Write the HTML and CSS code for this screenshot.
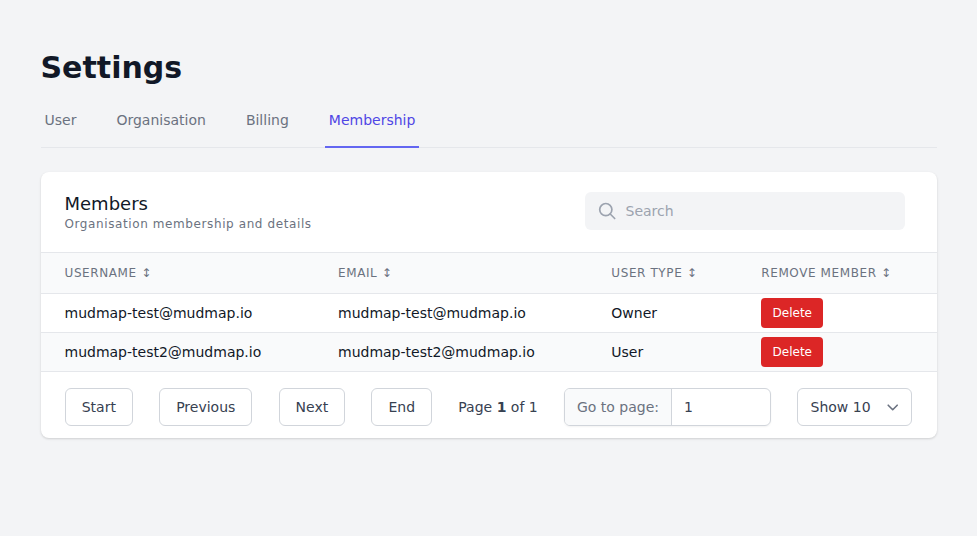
FILE: index.html
```html
<!DOCTYPE html>
<html lang="en">
<head>
<meta charset="utf-8">
<title>Settings</title>
<link rel="stylesheet" href="styles.css">
</head>
<body>
<main class="page">
  <h1>Settings</h1>
  <nav class="tabs">
    <a class="tab">User</a>
    <a class="tab">Organisation</a>
    <a class="tab">Billing</a>
    <a class="tab active">Membership</a>
  </nav>
  <section class="card">
    <header class="card-head">
      <div>
        <h2>Members</h2>
        <p class="sub">Organisation membership and details</p>
      </div>
      <label class="search">
        <svg width="20" height="20" viewBox="0 0 20 20" fill="none" stroke="currentColor" stroke-width="1.7" stroke-linecap="round"><circle cx="8.800" cy="8.600" r="6.100"/><path d="M13.200 13L17.700 17.500"/></svg>
        <span>Search</span>
      </label>
    </header>
    <div class="row head">
      <span>USERNAME ↕</span><span>EMAIL ↕</span><span>USER TYPE ↕</span><span>REMOVE MEMBER ↕</span>
    </div>
    <div class="row">
      <span>mudmap-test@mudmap.io</span><span>mudmap-test@mudmap.io</span><span>Owner</span><span><button class="delete">Delete</button></span>
    </div>
    <div class="row alt">
      <span>mudmap-test2@mudmap.io</span><span>mudmap-test2@mudmap.io</span><span>User</span><span><button class="delete">Delete</button></span>
    </div>
    <footer class="pager">
      <button class="btn">Start</button>
      <button class="btn">Previous</button>
      <button class="btn">Next</button>
      <button class="btn">End</button>
      <span class="count">Page <b>1</b> of 1</span>
      <div class="goto"><span class="goto-label">Go to page:</span><span class="goto-value">1</span></div>
      <div class="select">Show 10
        <svg width="20" height="20" viewBox="0 0 20 20" fill="none" stroke="#6b7280" stroke-width="1.6" stroke-linecap="round" stroke-linejoin="round"><path d="M5.200 8.200l4.500 4.500L14.200 8.200"/></svg>
      </div>
    </footer>
  </section>
</main>
</body>
</html>
```
FILE: styles.css
```css
* { box-sizing: border-box; }
body {
  margin: 0;
  background: #f3f4f6;
  color: #111827;
  font: 14px/20px "DejaVu Sans", sans-serif;
}
.page { min-height: 100vh; padding: 50px 40px 0 40.5px; }
h1 { margin: 0; font-size: 30px; line-height: 36px; font-weight: 700; }
.tabs {
  display: flex;
  gap: 32px;
  height: 62px;
  padding-top: 24px;
  border-bottom: 1px solid #e5e7eb;
}
.tab { padding: 0 4px; height: 38px; color: #6b7280; }
.tab.active { color: #4f46e5; border-bottom: 2px solid #6366f1; }
.card {
  margin-top: 24px;
  background: #fff;
  border-radius: 8px;
  box-shadow: 0 1px 3px rgba(0,0,0,.1), 0 1px 2px rgba(0,0,0,.06);
}
.card-head {
  display: flex;
  justify-content: space-between;
  height: 80px;
  padding: 20px 32px 0 24px;
}
h2 { margin: 0; font-size: 18px; line-height: 24px; font-weight: 400; }
.sub { margin: 0; font-size: 12px; line-height: 16px; letter-spacing: .6px; color: #6b7280; }
.search {
  display: flex;
  align-items: center;
  gap: 8.500px;
  width: 320px;
  height: 38px;
  padding-left: 12px;
  border-radius: 6px;
  background: #f3f4f6;
  color: #9ca3af;
}
.row {
  display: grid;
  grid-template-columns: 273.5px 273.3px 150px 1fr;
  align-items: center;
  height: 39px;
  padding-left: 24px;
  border-top: 1px solid #e5e7eb;
}
.row.head {
  height: 41px;
  background: #f9fafb;
  color: #6b7280;
  font-size: 12px;
  letter-spacing: .6px;
}
.alt { background: #f9fafb; }
button { font-family: inherit; margin: 0; }
.delete {
  display: block;
  width: 62px;
  height: 30px;
  padding: 0;
  border: 0;
  border-radius: 4px;
  background: #dc2626;
  color: #fff;
  font-size: 12px;
}
.pager {
  display: flex;
  align-items: center;
  justify-content: space-between;
  height: 67px;
  padding: 3px 24.8px 0 24.2px;
  border-top: 1px solid #e5e7eb;
  color: #374151;
}
.btn, .select {
  height: 38px;
  padding: 0 16px;
  border: 1px solid #d1d5db;
  border-radius: 6px;
  background: #fff;
  color: #374151;
  font-size: 14px;
}
.goto {
  display: flex;
  width: 207px;
  height: 38px;
  border: 1px solid #d1d5db;
  border-radius: 6px;
  line-height: 36px;
  overflow: hidden;
  box-shadow: 0 1px 2px rgba(0,0,0,.05);
}
.goto-label {
  padding: 0 12px;
  border-right: 1px solid #d1d5db;
  background: #f9fafb;
  color: #6b7280;
}
.goto-value { padding-left: 12px; }
.select {
  display: flex;
  align-items: center;
  justify-content: space-between;
  width: 115px;
  padding: 0 8px 0 12.300px;
}
```
